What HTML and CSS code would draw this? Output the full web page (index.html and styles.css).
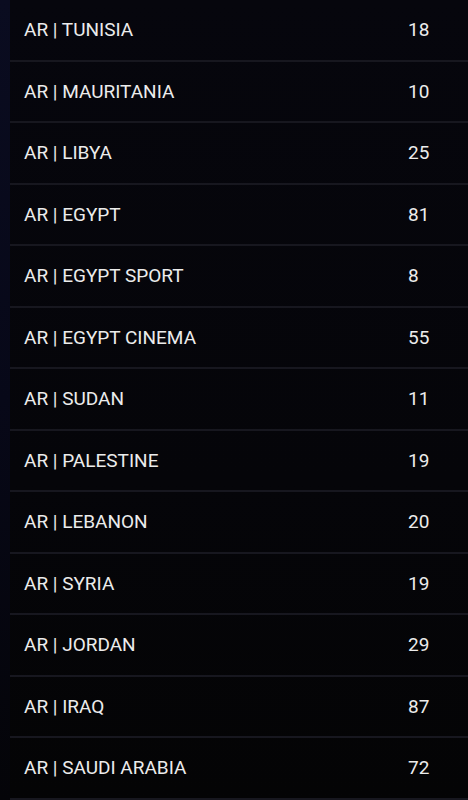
FILE: index.html
```html
<!DOCTYPE html>
<html>
<head>
<meta charset="utf-8">
<link rel="stylesheet" href="styles.css">
</head>
<body>
<div class="page">
  <ul class="list">
    <li class="row"><span class="name">AR | TUNISIA</span><span class="count">18</span></li>
    <li class="row"><span class="name">AR | MAURITANIA</span><span class="count">10</span></li>
    <li class="row"><span class="name">AR | LIBYA</span><span class="count">25</span></li>
    <li class="row"><span class="name">AR | EGYPT</span><span class="count">81</span></li>
    <li class="row"><span class="name">AR | EGYPT SPORT</span><span class="count">8</span></li>
    <li class="row"><span class="name">AR | EGYPT CINEMA</span><span class="count">55</span></li>
    <li class="row"><span class="name">AR | SUDAN</span><span class="count">11</span></li>
    <li class="row"><span class="name">AR | PALESTINE</span><span class="count">19</span></li>
    <li class="row"><span class="name">AR | LEBANON</span><span class="count">20</span></li>
    <li class="row"><span class="name">AR | SYRIA</span><span class="count">19</span></li>
    <li class="row"><span class="name">AR | JORDAN</span><span class="count">29</span></li>
    <li class="row"><span class="name">AR | IRAQ</span><span class="count">87</span></li>
    <li class="row"><span class="name">AR | SAUDI ARABIA</span><span class="count">72</span></li>
  </ul>
</div>
</body>
</html>
```
FILE: styles.css
```css
html, body {
  margin: 0;
  padding: 0;
  height: 100%;
  overflow: hidden;
}
body {
  background: linear-gradient(180deg, #0a0c20 0%, #070818 50%, #040408 100%);
  font-family: Roboto, "Noto Sans", sans-serif;
}
.page {
  margin-left: 10px;
  height: 100%;
  background: linear-gradient(180deg, #06060d 0%, #050509 60%, #040405 100%);
}
.list {
  list-style: none;
  margin: 0;
  padding: 0;
}
.row {
  box-sizing: border-box;
  height: 61.5px;
  display: flex;
  align-items: center;
  padding: 0 0 0 14px;
  border-bottom: 2px solid #17171f;
  color: #ececec;
  font-size: 19px;
}
.name {
  flex: 1;
}
.count {
  width: 60px;
}
```
